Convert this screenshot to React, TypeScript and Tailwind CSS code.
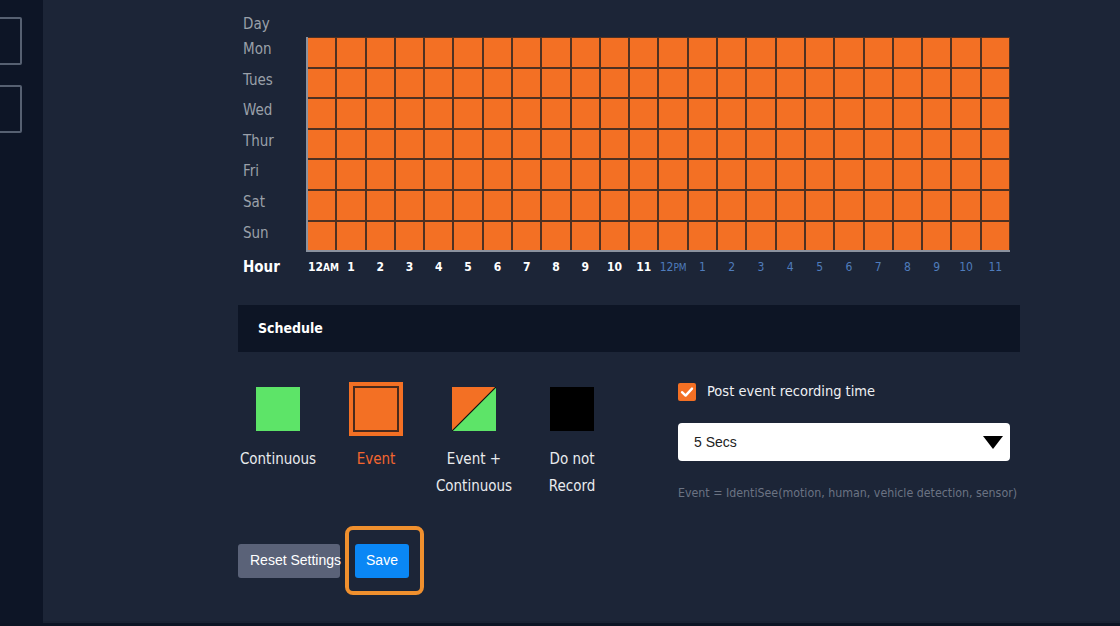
import React from "react";

const days = ["Mon", "Tues", "Wed", "Thur", "Fri", "Sat", "Sun"];
const amHours = ["1", "2", "3", "4", "5", "6", "7", "8", "9", "10", "11"];
const font = { fontFamily: '"DejaVu Sans Condensed", "DejaVu Sans", sans-serif' };

export default function App() {
  return (
    <div className="h-[626px] w-[1120px] flex flex-col bg-[#0c1424] overflow-hidden" style={font}>
      <div className="flex flex-1 min-h-0">
        {/* sidebar */}
        <div className="w-[43px] bg-[#0d1526] flex flex-col pt-[17px] gap-[20px] overflow-hidden">
          <div className="w-[42px] h-[48px] -ml-[20px] border-2 border-[#566071] rounded-[2px]" />
          <div className="w-[42px] h-[48px] -ml-[20px] border-2 border-[#566071] rounded-[2px]" />
        </div>
        {/* main */}
        <div className="flex-1 bg-[#1c2537] pl-[195px] pr-[100px] pt-[14px] border-b-2 border-[#1a2233]">
          {/* day header */}
          <div className="pl-[5px] h-[20px] leading-[20px] text-[15px] text-[#9aa0a9] mb-[3px]">Day</div>
          <div className="flex">
            <div className="w-[68px] pl-[5px] flex flex-col">
              {days.map((d) => (
                <div key={d} className="h-[30.6px] text-[15px] leading-[24px] text-[#9aa0a9]">
                  {d}
                </div>
              ))}
            </div>
            <div className="w-[704px] border-l-2 border-b-2 border-[#8a919e] bg-[#4e3122] pt-[1px] pr-[1px]">
              <div className="grid grid-cols-24 gap-[2px]">
                {Array.from({ length: 7 * 24 }).map((_, i) => (
                  <div key={i} className="h-[28.6px] bg-[#f37024]" />
                ))}
              </div>
            </div>
          </div>
          {/* hour row */}
          <div className="flex h-[30px] items-center">
            <div className="w-[68px] pl-[5px] text-[15px] font-bold text-white">Hour</div>
            <div className="w-[704px] pl-[2px] pr-[1px] grid grid-cols-24 gap-[2px] text-[12px]">
              <div className="text-center font-bold text-white whitespace-nowrap">
                12<span className="text-[10px]">AM</span>
              </div>
              {amHours.map((h) => (
                <div key={"a" + h} className="text-center font-bold text-white">
                  {h}
                </div>
              ))}
              <div className="text-center text-[#4f7cbc] whitespace-nowrap">
                12<span className="text-[10px]">PM</span>
              </div>
              {amHours.map((h) => (
                <div key={"p" + h} className="text-center text-[#4f7cbc]">
                  {h}
                </div>
              ))}
            </div>
          </div>
          {/* schedule bar */}
          <div className="mt-[23px] h-[47px] bg-[#0d1525] flex items-center pl-[20px]">
            <span className="text-[14px] font-bold text-white">Schedule</span>
          </div>
          {/* legend + options */}
          <div className="flex mt-[30px]">
            <div className="flex gap-[18px]">
              <LegendItem label={["Continuous"]}>
                <div className="w-[44px] h-[44px] bg-[#5de468]" />
              </LegendItem>
              <LegendItem label={["Event"]} active>
                <div className="w-[54px] h-[54px] border-[3px] border-[#f37024] bg-[#f37024] p-[1px]">
                  <div className="w-full h-full border-2 border-[#4a2a1c] bg-[#f37024]" />
                </div>
              </LegendItem>
              <LegendItem label={["Event +", "Continuous"]}>
                <svg width="44" height="44" viewBox="0 0 44 44">
                  <polygon points="0,0 44,0 0,44" fill="#f37024" />
                  <polygon points="44,0 44,44 0,44" fill="#5de468" />
                  <line x1="44" y1="0" x2="0" y2="44" stroke="#111" strokeWidth="1.2" />
                </svg>
              </LegendItem>
              <LegendItem label={["Do not", "Record"]}>
                <div className="w-[44px] h-[44px] bg-black" />
              </LegendItem>
            </div>
            <div className="ml-[66px] flex-1 flex flex-col">
              <div className="flex items-center h-[20px] gap-[11px]">
                <div className="w-[18px] h-[18px] rounded-[2px] bg-[#f37024] flex items-center justify-center">
                  <svg width="14" height="14" viewBox="0 0 14 14">
                    <path d="M2 7.2 L5.6 10.6 L12 3.6" fill="none" stroke="white" strokeWidth="2.4" strokeLinecap="round" strokeLinejoin="round" />
                  </svg>
                </div>
                <span className="text-[14.5px] text-[#eef0f3]">Post event recording time</span>
              </div>
              <div
                className="mt-[21px] w-[332px] h-[38px] bg-white rounded-[4px] flex items-center justify-between pl-[16px] pr-[7px]"
                style={{ fontFamily: '"Liberation Sans", Arial, sans-serif' }}
              >
                <span className="text-[14px] text-[#222]">5 Secs</span>
                <svg width="20" height="13" viewBox="0 0 20 13">
                  <polygon points="0,0 20,0 10,13" fill="#000" />
                </svg>
              </div>
              <div className="mt-[23px] text-[12.3px] text-[#6b7383]">
                Event = IdentiSee(motion, human, vehicle detection, sensor)
              </div>
            </div>
          </div>
          {/* buttons */}
          <div className="flex gap-[15px] mt-[41px]" style={{ fontFamily: '"Liberation Sans", Arial, sans-serif' }}>
            <button className="h-[34px] w-[102px] rounded-[3px] bg-[#5a6278] text-white text-[14px] text-left pl-[12px] whitespace-nowrap">
              Reset Settings
            </button>
            <div className="relative">
              <button className="h-[34px] w-[54px] rounded-[3px] bg-[#0a87f5] text-white text-[14px]">Save</button>
              <div className="absolute -left-[10px] -top-[18px] w-[79px] h-[69px] border-[4px] border-[#f0902e] rounded-[8px] pointer-events-none" />
            </div>
          </div>
        </div>
      </div>
      <div className="h-[3px] bg-[#0c1424]" />
    </div>
  );
}

function LegendItem({ label, active, children }: { label: string[]; active?: boolean; children: React.ReactNode }) {
  return (
    <div className="w-[80px] flex flex-col items-center">
      <div className="h-[54px] flex items-center justify-center">{children}</div>
      <div className={"mt-[10px] text-[15px] leading-[27px] text-center " + (active ? "text-[#f3652f]" : "text-[#e9ebee]")}>
        {label.map((l) => (
          <div key={l} className="whitespace-nowrap">
            {l}
          </div>
        ))}
      </div>
    </div>
  );
}
